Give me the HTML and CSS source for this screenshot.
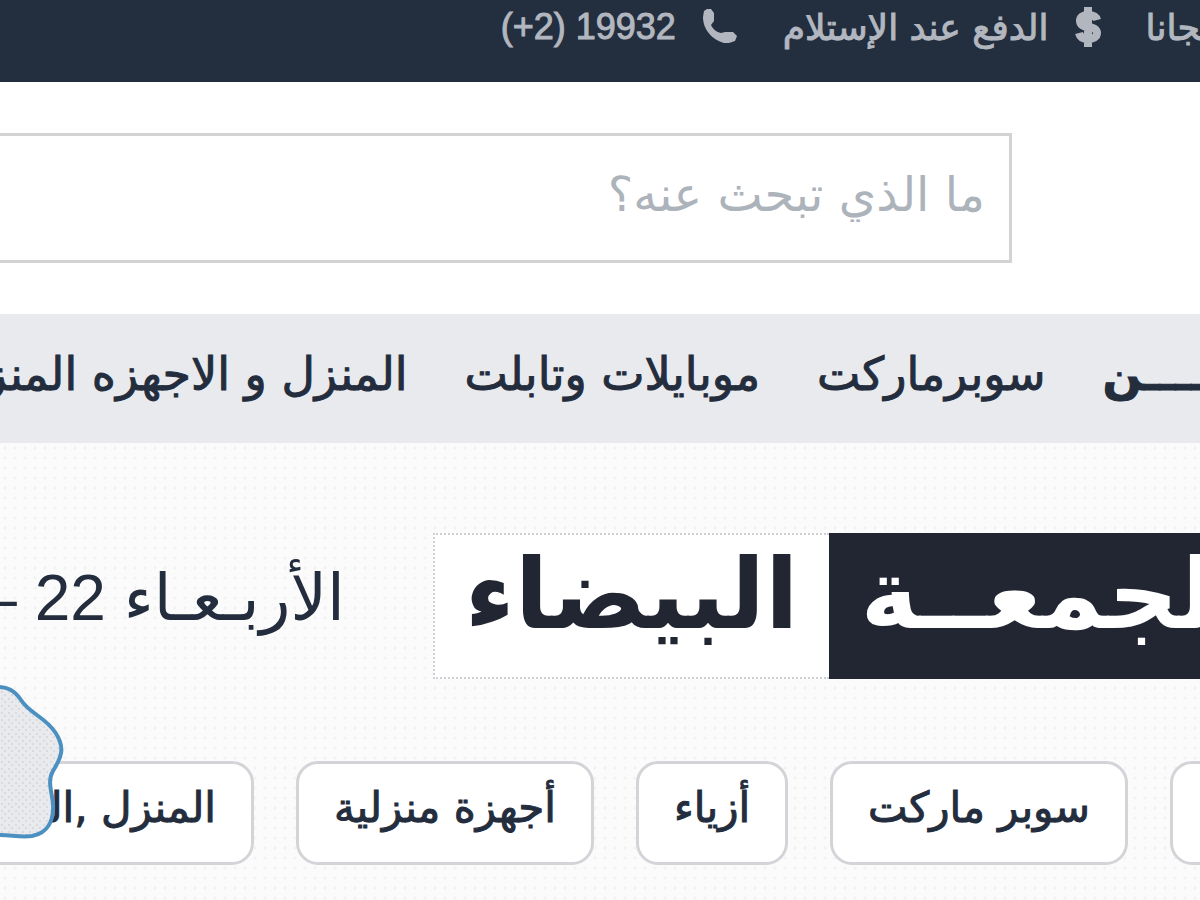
FILE: index.html
```html
<!DOCTYPE html>
<html lang="ar" dir="rtl">
<head>
<meta charset="utf-8">
<title>الجمعة البيضاء</title>
<link rel="stylesheet" href="styles.css">
</head>
<body>
<header class="topbar">
  <span class="perk">مجانا</span>
  <span class="perk">
    <svg class="icon-dollar" viewBox="0 0 28 42" aria-hidden="true"><path d="M14 1v40M23 14c-1-4-4-5-9-5s-8 2-8 6 4 6 8 6 9 2 9 6-4 6-9 6-8-2-9-6" fill="none" stroke="currentColor" stroke-width="8"/></svg>
    <span>الدفع عند الإستلام</span>
  </span>
  <a class="perk phone" href="tel:+219932">
    <svg class="icon-phone" viewBox="0 0 38 38" aria-hidden="true"><path d="M3 3 6 1h4l3 4v8l-3 4c2 4 5 7 10 8l4-1h8l4 4-2 5-6 2h-5C12 32 2 22 2 9z" fill="currentColor"/></svg>
    <span dir="ltr">(+2) 19932</span>
  </a>
</header>
<form class="search" role="search">
  <input class="search-input" type="text" aria-label="بحث" placeholder="ما الذي تبحث عنه؟">
</form>
<nav class="nav">
  <a class="nav-link nav-lead" href="#">ـــــــن</a>
  <a class="nav-link" href="#">سوبرماركت</a>
  <a class="nav-link" href="#">موبايلات وتابلت</a>
  <a class="nav-link" href="#">المنزل و الاجهزه المنزلية</a>
</nav>
<main class="promo">
  <div class="headline">
    <h1 class="title"><span class="title-part dark">الجمعــة</span><span class="title-part light">البيضاء</span></h1>
    <p class="date">الأربـعـاء 22 –</p>
  </div>
  <div class="chips">
    <a class="chip" href="#" aria-label="عروض"></a>
    <a class="chip" href="#">سوبر ماركت</a>
    <a class="chip" href="#">أزياء</a>
    <a class="chip" href="#">أجهزة منزلية</a>
    <a class="chip" href="#">المنزل ,المطبخ</a>
  </div>
  <svg class="badge" viewBox="0 0 68 158" aria-hidden="true">
    <defs><pattern id="dots" width="7" height="7" patternUnits="userSpaceOnUse"><rect width="7" height="7" fill="#e9eaee"/><circle cx="2" cy="2" r="1" fill="#d4d5d9"/><circle cx="5" cy="5" r="1" fill="#d4d5d9"/></pattern></defs>
    <path d="M-6 4C8 3 15 8 21 17 29 30 45 34 55 49 66 65 61 75 53 88 47 98 52 109 53 121 54 137 48 150 32 153 19 155 9 151-6 152z" fill="url(#dots)" stroke="#4b90c0" stroke-width="4"/>
  </svg>
</main>
</body>
</html>
```
FILE: styles.css
```css
* { box-sizing: border-box; }
html { overflow: hidden; }
body {
  margin: 0;
  min-height: 100vh;
  display: flex;
  flex-direction: column;
  overflow: hidden;
  background: #fff;
  color: #232d3d;
  font-family: "DejaVu Sans", sans-serif;
  white-space: nowrap;
}
a { color: inherit; text-decoration: none; }
.topbar {
  height: 82px;
  padding-bottom: 28px;
  margin-right: -20px;
  display: flex;
  align-items: center;
  gap: 44px;
  background: #232e3f;
  color: #b2b7bf;
  font-size: 36px;
  -webkit-text-stroke: 1px;
}
.perk { display: flex; align-items: center; gap: 25px; }
.phone { font-family: "Liberation Sans", sans-serif; }
.icon-dollar { width: 28px; height: 42px; }
.icon-phone { width: 38px; height: 38px; }
.search { padding: 51px 188px 51px 0; }
.search-input {
  display: block;
  width: 100%;
  height: 130px;
  padding: 0 24px 8px;
  border: 3px solid #d3d3d4;
  border-left: 0;
  border-radius: 0;
  background: #fff;
  font: inherit;
  font-size: 48px;
  line-height: 90px;
}
.search-input::placeholder { color: #adb3bb; opacity: 1; line-height: 90px; }
.nav {
  height: 129px;
  padding-bottom: 10px;
  margin-right: -54px;
  display: flex;
  align-items: center;
  gap: 57px;
  background: #e9eaee;
  font-size: 46px;
  -webkit-text-stroke: 1px;
}
.nav-link { flex: none; }
.nav-lead { font-weight: bold; }
.promo {
  flex: 1;
  position: relative;
  padding-top: 90px;
  background: #fbfbfb radial-gradient(circle, #f2f2f2 1px, transparent 2px) 0 0 / 10px 10px;
}
.headline { display: flex; align-items: center; gap: 88px; margin-right: -81px; }
.title { margin: 0; display: flex; font-size: 98px; line-height: 118px; }
.title-part { padding: 0 30px 24px; border: 2px dotted transparent; }
.dark { background: #222632; color: #fff; }
.light { background: #fff; border-color: #cfd0d5; border-right: 0; color: #222632; }
.date { margin: 0; padding-bottom: 16px; font-family: "Liberation Sans", "DejaVu Sans", sans-serif; font-size: 64px; }
.chips { display: flex; gap: 42px; margin: 82px -60px 0 0; -webkit-text-stroke: 1px; }
.chip {
  flex: none;
  height: 104px;
  min-width: 90px;
  padding: 0 35px 12px;
  display: flex;
  align-items: center;
  border: 3px solid #d3d4d8;
  border-radius: 22px;
  background: #fff;
  font-size: 42px;
}
.badge { position: absolute; left: 0; bottom: 59px; width: 68px; height: 158px; }
```
